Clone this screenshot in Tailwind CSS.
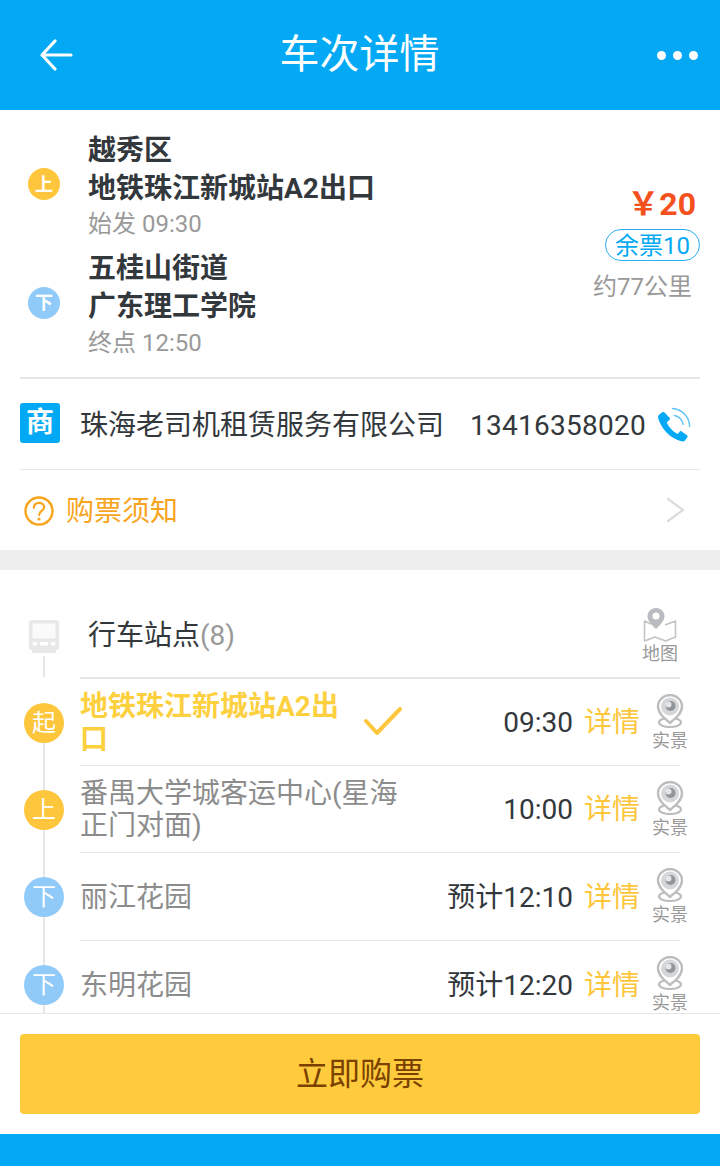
<!DOCTYPE html>
<html lang="zh-CN">
<head>
<meta charset="utf-8">
<script src="https://cdn.jsdelivr.net/npm/@tailwindcss/browser@4"></script>
<title>车次详情</title>
</head>
<body class="bg-white">
<div class="w-[720px] h-[1166px] overflow-hidden flex flex-col bg-white font-['Roboto','Noto_Sans_CJK_SC',sans-serif] text-[#33383d]">

  <header class="h-[110px] shrink-0 bg-[#03a9f4] flex items-center pl-[40px] pr-[22px] text-white">
    <div class="flex-1">
      <svg width="33" height="32" viewBox="0 0 33 32" fill="none" stroke="white" stroke-width="3.200" stroke-linecap="round" stroke-linejoin="round"><path d="M31 16H2M15 2 2 16l13 14"/></svg>
    </div>
    <h1 class="mr-[19px] text-[40px] leading-[48px] font-normal">车次详情</h1>
    <div class="flex-1 flex justify-end gap-[7px]">
      <span class="w-[9px] h-[9px] rounded-full bg-white"></span>
      <span class="w-[9px] h-[9px] rounded-full bg-white"></span>
      <span class="w-[9px] h-[9px] rounded-full bg-white"></span>
    </div>
  </header>

  <section class="h-[440px] shrink-0 flex flex-col px-[20px]">
    <div class="h-[269px] shrink-0 flex justify-between border-b-2 border-[#e6e6e6]">
      <div class="pt-[22px] flex flex-col gap-[10px]">
        <div class="flex items-center">
          <span class="w-[32px] h-[32px] ml-[8px] mr-[28px] mb-[4px] rounded-full bg-[#fec63d] flex items-center justify-center text-white text-[18px] font-bold">上</span>
          <div>
            <p class="text-[28px] leading-[38px] font-bold">越秀区</p>
            <p class="text-[28px] leading-[38px] font-bold">地铁珠江新城站A2出口</p>
            <p class="text-[24px] leading-[32px] text-[#999]">始发 09:30</p>
          </div>
        </div>
        <div class="flex items-center">
          <span class="w-[32px] h-[32px] ml-[8px] mr-[28px] mb-[5px] rounded-full bg-[#90caf9] flex items-center justify-center text-white text-[18px] font-bold">下</span>
          <div>
            <p class="text-[28px] leading-[38px] font-bold">五桂山街道</p>
            <p class="text-[28px] leading-[38px] font-bold">广东理工学院</p>
            <p class="text-[24px] leading-[34px] text-[#999]">终点 12:50</p>
          </div>
        </div>
      </div>
      <div class="flex flex-col items-end pt-[74px]">
        <p class="text-[32px] leading-[40px] font-bold text-[#f4511e] pr-[4px] whitespace-nowrap">￥20</p>
        <span class="mt-[5px] h-[32px] w-[95px] pt-[1px] rounded-full border-[1.500px] border-[#29b0f0] text-[#03a9f4] text-[24px] leading-[30px] flex items-center justify-center whitespace-nowrap">余票10</span>
        <p class="mt-[9px] mr-[8px] text-[24px] leading-[34px] text-[#999] whitespace-nowrap">约77公里</p>
      </div>
    </div>

    <div class="h-[91px] shrink-0 flex items-center border-b border-[#e6e6e6]">
      <span class="w-[40px] h-[40px] mb-[2px] rounded-[3px] bg-[#03a9f4] flex items-center justify-center text-white text-[28px] font-bold">商</span>
      <span class="mt-[4px] ml-[20px] text-[28px] leading-[38px] whitespace-nowrap">珠海老司机租赁服务有限公司</span>
      <span class="mt-[4px] ml-[26px] text-[28px] leading-[38px] tracking-[0.25px] whitespace-nowrap">13416358020</span>
      <svg class="ml-[11px]" width="36" height="36" viewBox="0 0 36 36" fill="none">
        <path d="M5 6.500 2.300 8.600C1.200 9.500.8 10.800 1.200 12.300 2.800 18 6.500 23.500 10 27c3.800 3.800 9 7 14.500 8.300 1.700.4 3-.2 3.900-1.400l1.900-2.700c.5-.7.4-1.400-.3-1.900l-5.300-3.900c-.7-.5-1.300-.4-1.900.2l-2 2.400c-2.600-1-4.900-3-6.700-5-1.800-2-3.500-4.300-4.300-6.800l2.600-2.200c.6-.5.700-1.200.4-1.900L8 7c-.6-.9-1.900-1.200-3-.5Z" fill="#03a9f4"/>
        <path d="M17.500 9.500c4.500.6 8 4.200 8.500 8.800" stroke="#5cc3f5" stroke-width="1.400" stroke-linecap="round"/>
        <path d="M15.500 2.500C24 3 32.500 10 32.700 20.500" stroke="#5cc3f5" stroke-width="1.400" stroke-linecap="round"/>
      </svg>
    </div>

    <div class="h-[80px] shrink-0 flex items-center">
      <svg class="ml-[4px] mt-[1px]" width="30" height="30" viewBox="0 0 30 30" fill="none">
        <circle cx="15" cy="15" r="13.500" stroke="#f8a41c" stroke-width="2.400"/>
        <path d="M9.800 11.800c0-3 2.300-5 5.300-5 2.800 0 5 1.800 5 4.300 0 3.800-5 3.900-5 7.900" stroke="#f8a41c" stroke-width="2.200" stroke-linecap="round"/>
        <circle cx="15" cy="23" r="1.600" fill="#f8a41c"/>
      </svg>
      <span class="mt-[4px] ml-[12px] text-[28px] leading-[38px] text-[#f8a41c]">购票须知</span>
      <svg class="ml-auto mr-[15px]" width="19" height="26" viewBox="0 0 19 26" fill="none" stroke="#dcdcdc" stroke-width="2.200" stroke-linecap="round" stroke-linejoin="round"><path d="M2 2 17 13 2 24"/></svg>
    </div>
  </section>

  <div class="h-[20px] shrink-0 bg-[#eeeeee]"></div>

  <section class="h-[443px] shrink-0 overflow-hidden flex flex-col pt-[30px]">
    <div class="h-[79px] shrink-0 flex relative">
      <svg class="absolute left-[29px] top-[20px]" width="30" height="33" viewBox="0 0 30 33" fill="none">
        <path d="M3 0h24a3 3 0 0 1 3 3v25a2 2 0 0 1-2 2h-1v3H3v-3H2a2 2 0 0 1-2-2V3a3 3 0 0 1 3-3Z" fill="#e8e8e8"/>
        <rect x="3.500" y="3.500" width="23" height="15" fill="#fafafa"/>
        <rect x="3.500" y="22" width="5" height="3.500" rx="1.500" fill="#fff"/>
        <rect x="11" y="22" width="8" height="3.500" fill="#fff"/>
        <rect x="21.500" y="22" width="5" height="3.500" rx="1.500" fill="#fff"/>
      </svg>
      <span class="absolute left-[43px] top-[56px] w-[2px] h-[21px] bg-[#e6e6e6]"></span>
      <div class="ml-[80px] mr-[40px] flex-1 flex items-start justify-between border-b-2 border-[#e6e6e6]">
        <p class="ml-[8px] mt-[17px] text-[28px] leading-[38px] whitespace-nowrap">行车站点<span class="text-[#999]">(8)</span></p>
        <div class="mt-[8px] mr-[2px] flex flex-col items-center w-[36px]">
          <svg width="34" height="34" viewBox="0 0 34 34" fill="none">
            <path d="M8 16 1.500 13v20l10.500-4 10.500 4L32.500 29V13L22 17" stroke="#c4c4c4" stroke-width="1.600" stroke-linejoin="round"/>
            <path d="M13 0C8 0 4.500 3.700 4.500 8.300 4.500 13 9 17 13 21c4-4 8.500-8 8.500-12.700C21.500 3.700 18 0 13 0Z" fill="#b8bcc0"/>
            <circle cx="13" cy="8" r="3.500" fill="#fff"/>
          </svg>
          <span class="mt-[2px] text-[18px] leading-[20px] text-[#999] whitespace-nowrap">地图</span>
        </div>
      </div>
    </div>

    <div class="h-[86.500px] shrink-0 flex relative">
      <span class="absolute left-[43px] top-[25px] bottom-0 w-[2px] bg-[#e6e6e6]"></span>
      <span class="absolute left-[24px] top-[24px] w-[40px] h-[40px] rounded-full bg-[#fec63d] flex items-center justify-center text-white text-[24px]">起</span>
      <div class="ml-[80px] mr-[40px] flex-1 flex items-center border-b border-[#e6e6e6] relative">
        <p class="mt-[3px] w-[262px] text-[28px] leading-[33px] font-bold text-[#fdd03f]">地铁珠江新城站A2出口</p>
        <svg class="ml-[22px] mt-[-2px]" width="38" height="30" viewBox="0 0 38 30" fill="none" stroke="#fec63d" stroke-width="4" stroke-linecap="round" stroke-linejoin="round"><path d="M2 15 13 27 36 3"/></svg>
        <span class="mt-[3px] ml-auto text-[28px] leading-[38px] whitespace-nowrap">09:30</span>
        <span class="mt-[3px] ml-[11px] text-[28px] leading-[38px] text-[#fec63d] whitespace-nowrap">详情</span>
        <div class="ml-[12px] w-[36px] mr-[-8px] flex flex-col items-center">
          <svg class="mb-[4px]" width="28" height="34" viewBox="0 0 28 34" fill="none">
            <ellipse cx="14" cy="28.500" rx="11" ry="4.500" stroke="#bdbdbd" stroke-width="2.200"/>
            <path d="M14 1C7.500 1 2 6 2 12.500c0 6.500 6 11.500 12 16.500 6-5 12-10 12-16.500C26 6 20.500 1 14 1Z" fill="#fff" stroke="#bdbdbd" stroke-width="2.400"/>
            <circle cx="14" cy="12.500" r="9" fill="#d4d6d8"/><circle cx="14.500" cy="12" r="5" fill="#909599"/><circle cx="12.500" cy="10.500" r="3" fill="#e2e4e6"/>
          </svg>
          <span class="text-[18px] leading-[18px] text-[#999] whitespace-nowrap">实景</span>
        </div>
      </div>
    </div>

    <div class="h-[87.500px] shrink-0 flex relative">
      <span class="absolute left-[43px] top-0 bottom-0 w-[2px] bg-[#e6e6e6]"></span>
      <span class="absolute left-[24px] top-[24px] w-[40px] h-[40px] rounded-full bg-[#fec63d] flex items-center justify-center text-white text-[24px]">上</span>
      <div class="ml-[80px] mr-[40px] flex-1 flex items-center border-b border-[#e6e6e6] relative">
        <p class="mt-[3px] w-[330px] text-[28px] leading-[32px] text-[#8c8c8c]">番禺大学城客运中心(星海正门对面)</p>
        <span class="mt-[3px] ml-auto text-[28px] leading-[38px] whitespace-nowrap">10:00</span>
        <span class="mt-[3px] ml-[11px] text-[28px] leading-[38px] text-[#fec63d] whitespace-nowrap">详情</span>
        <div class="ml-[12px] w-[36px] mr-[-8px] flex flex-col items-center">
          <svg class="mb-[4px]" width="28" height="34" viewBox="0 0 28 34" fill="none">
            <ellipse cx="14" cy="28.500" rx="11" ry="4.500" stroke="#bdbdbd" stroke-width="2.200"/>
            <path d="M14 1C7.500 1 2 6 2 12.500c0 6.500 6 11.500 12 16.500 6-5 12-10 12-16.500C26 6 20.500 1 14 1Z" fill="#fff" stroke="#bdbdbd" stroke-width="2.400"/>
            <circle cx="14" cy="12.500" r="9" fill="#d4d6d8"/><circle cx="14.500" cy="12" r="5" fill="#909599"/><circle cx="12.500" cy="10.500" r="3" fill="#e2e4e6"/>
          </svg>
          <span class="text-[18px] leading-[18px] text-[#999] whitespace-nowrap">实景</span>
        </div>
      </div>
    </div>

    <div class="h-[87.500px] shrink-0 flex relative">
      <span class="absolute left-[43px] top-0 bottom-0 w-[2px] bg-[#e6e6e6]"></span>
      <span class="absolute left-[24px] top-[24px] w-[40px] h-[40px] rounded-full bg-[#90caf9] flex items-center justify-center text-white text-[24px]">下</span>
      <div class="ml-[80px] mr-[40px] flex-1 flex items-center border-b border-[#e6e6e6] relative">
        <p class="mt-[4px] text-[28px] leading-[38px] text-[#8c8c8c]">丽江花园</p>
        <span class="mt-[4px] ml-auto text-[28px] leading-[38px] whitespace-nowrap">预计12:10</span>
        <span class="mt-[4px] ml-[11px] text-[28px] leading-[38px] text-[#fec63d] whitespace-nowrap">详情</span>
        <div class="ml-[12px] w-[36px] mr-[-8px] flex flex-col items-center">
          <svg class="mb-[4px]" width="28" height="34" viewBox="0 0 28 34" fill="none">
            <ellipse cx="14" cy="28.500" rx="11" ry="4.500" stroke="#bdbdbd" stroke-width="2.200"/>
            <path d="M14 1C7.500 1 2 6 2 12.500c0 6.500 6 11.500 12 16.500 6-5 12-10 12-16.500C26 6 20.500 1 14 1Z" fill="#fff" stroke="#bdbdbd" stroke-width="2.400"/>
            <circle cx="14" cy="12.500" r="9" fill="#d4d6d8"/><circle cx="14.500" cy="12" r="5" fill="#909599"/><circle cx="12.500" cy="10.500" r="3" fill="#e2e4e6"/>
          </svg>
          <span class="text-[18px] leading-[18px] text-[#999] whitespace-nowrap">实景</span>
        </div>
      </div>
    </div>

    <div class="h-[87.500px] shrink-0 flex relative">
      <span class="absolute left-[43px] top-0 bottom-0 w-[2px] bg-[#e6e6e6]"></span>
      <span class="absolute left-[24px] top-[24px] w-[40px] h-[40px] rounded-full bg-[#90caf9] flex items-center justify-center text-white text-[24px]">下</span>
      <div class="ml-[80px] mr-[40px] flex-1 flex items-center relative">
        <p class="mt-[4px] text-[28px] leading-[38px] text-[#8c8c8c]">东明花园</p>
        <span class="mt-[4px] ml-auto text-[28px] leading-[38px] whitespace-nowrap">预计12:20</span>
        <span class="mt-[4px] ml-[11px] text-[28px] leading-[38px] text-[#fec63d] whitespace-nowrap">详情</span>
        <div class="ml-[12px] w-[36px] mr-[-8px] flex flex-col items-center">
          <svg class="mb-[4px]" width="28" height="34" viewBox="0 0 28 34" fill="none">
            <ellipse cx="14" cy="28.500" rx="11" ry="4.500" stroke="#bdbdbd" stroke-width="2.200"/>
            <path d="M14 1C7.500 1 2 6 2 12.500c0 6.500 6 11.500 12 16.500 6-5 12-10 12-16.500C26 6 20.500 1 14 1Z" fill="#fff" stroke="#bdbdbd" stroke-width="2.400"/>
            <circle cx="14" cy="12.500" r="9" fill="#d4d6d8"/><circle cx="14.500" cy="12" r="5" fill="#909599"/><circle cx="12.500" cy="10.500" r="3" fill="#e2e4e6"/>
          </svg>
          <span class="text-[18px] leading-[18px] text-[#999] whitespace-nowrap">实景</span>
        </div>
      </div>
    </div>
  </section>

  <footer class="h-[121px] shrink-0 border-t border-[#e6e6e6] px-[20px] pt-[20px]">
    <button class="w-full h-[80px] rounded-[4px] bg-[#ffcb3d] text-[#7a4100] text-[32px]">立即购票</button>
  </footer>

  <div class="flex-1 bg-[#03a9f4]"></div>
</div>
</body>
</html>
